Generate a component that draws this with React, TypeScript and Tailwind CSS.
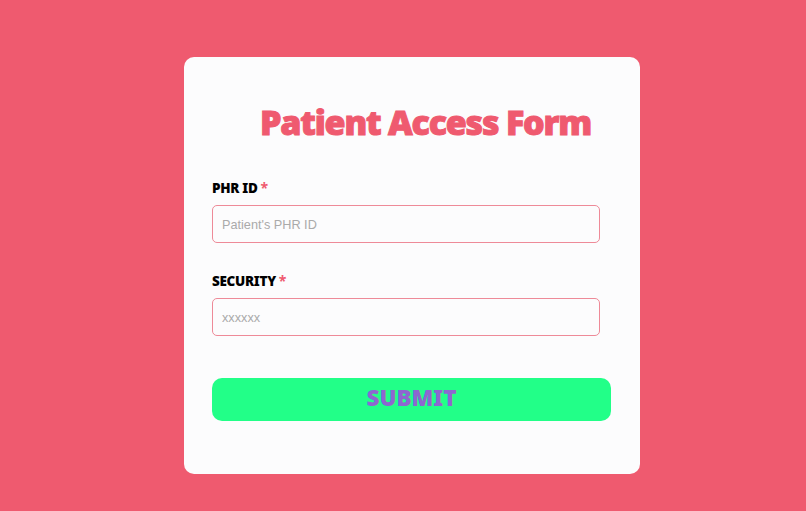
export default function App() {
  return (
    <div className="h-[511px] w-full overflow-hidden bg-[#ef5a6f] pl-[184px] pt-[57px]">
      <form className="flex h-[417px] w-[456px] flex-col rounded-[10px] bg-[#fcfcfd] pl-[28px] pt-[45px]">
        <h1 className="ml-[48px] whitespace-nowrap font-['Open_Sans',sans-serif] text-[34px] leading-[40px] font-extrabold tracking-[-1.2px] text-[#ef5a6f] [-webkit-text-stroke:1px_#ef5a6f]">
          Patient Access Form
        </h1>
        <label className="mt-[37px] flex items-baseline gap-[3px] font-['Noto_Sans',sans-serif] text-[13.5px] leading-[18px] font-black tracking-[-0.3px] text-black">
          PHR ID <span className="text-[14px] leading-[18px] font-bold text-[#ef5a6f]">*</span>
        </label>
        <input
          placeholder="Patient's PHR ID"
          className="mt-[8px] h-[38px] w-[388px] rounded-[5px] border border-[#ee8a98] bg-[#fcfcfd] px-[9px] pt-[1px] font-['Liberation_Sans',sans-serif] text-[12.7px] placeholder:text-[#aaaaaa]"
        />
        <label className="mt-[29px] flex items-baseline gap-[3px] font-['Noto_Sans',sans-serif] text-[13.5px] leading-[18px] font-black tracking-[-0.3px] text-black">
          SECURITY <span className="text-[14px] leading-[18px] font-bold text-[#ef5a6f]">*</span>
        </label>
        <input
          placeholder="xxxxxx"
          className="mt-[8px] h-[38px] w-[388px] rounded-[5px] border border-[#ee8a98] bg-[#fcfcfd] px-[9px] pt-[1px] font-['Liberation_Sans',sans-serif] text-[12.7px] placeholder:text-[#aaaaaa]"
        />
        <button
          type="button"
          className="mt-[42px] flex h-[43px] w-[399px] items-start justify-center rounded-[10px] bg-[#22ff88] pt-[2px] font-['Noto_Sans',sans-serif] text-[22.5px] leading-[36px] font-black text-[#8e66d0]"
        >
          SUBMIT
        </button>
      </form>
    </div>
  );
}
